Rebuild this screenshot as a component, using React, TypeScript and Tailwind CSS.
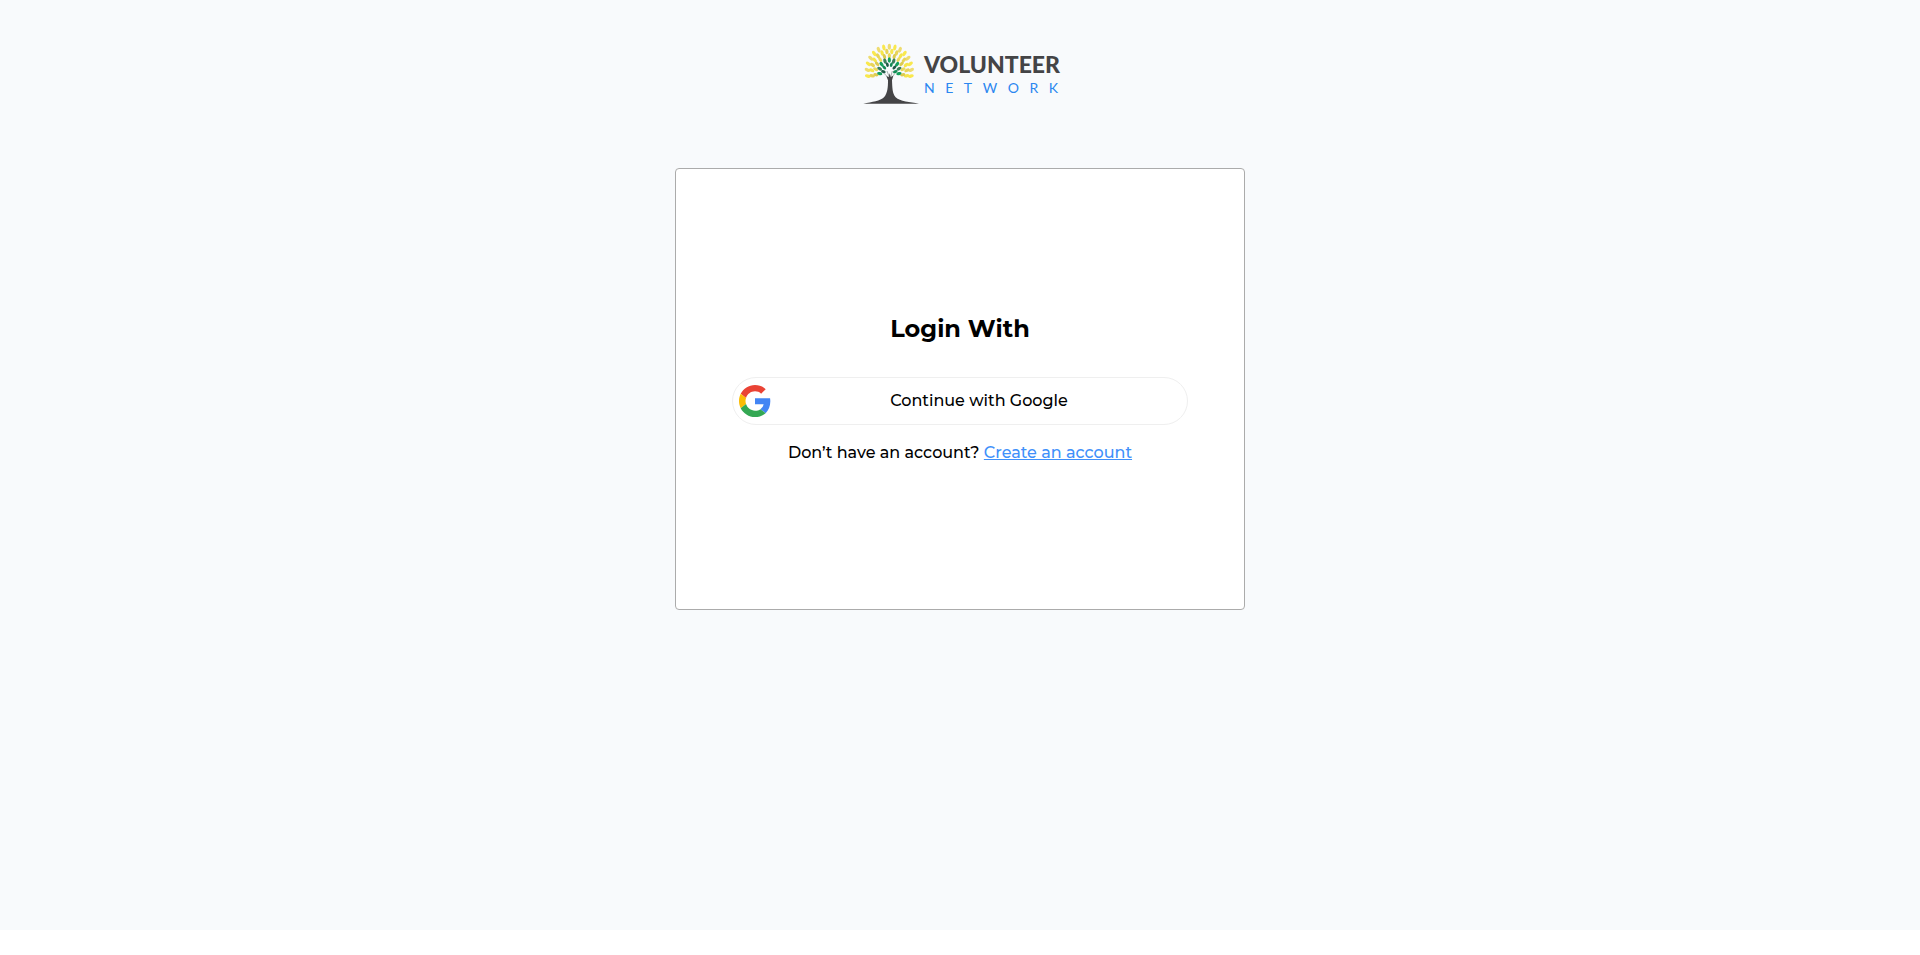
const rings = [
  { radius: 73, count: 15, spread: 102, length: 9, width: 5, colors: ["#f9e84e", "#eedc70"] },
  { radius: 59, count: 14, spread: 104, length: 8.5, width: 5, colors: ["#e8d458", "#f6e64c"] },
  { radius: 46, count: 11, spread: 104, length: 8, width: 4.8, colors: ["#dccb50", "#ead95c"] },
  { radius: 33, count: 9, spread: 104, length: 8, width: 4.8, colors: ["#14a05c", "#3b7f5a"] },
  { radius: 20, count: 6, spread: 96, length: 7, width: 4.2, colors: ["#1f5a47", "#128a55"] },
];

const crown = { x: 82, y: 84, stretch: 0.9 };

function TreeLogo() {
  return (
    <svg viewBox="0 0 174 186" className="h-[62px] w-[58px]" aria-hidden="true">
      {rings.map((ring, r) =>
        Array.from({ length: ring.count }, (_, i) => {
          const angle = -ring.spread + (2 * ring.spread * i) / (ring.count - 1);
          const radians = (angle * Math.PI) / 180;
          const x = crown.x + ring.radius * crown.stretch * Math.sin(radians);
          const y = crown.y - ring.radius * Math.cos(radians);
          return (
            <ellipse
              key={`${r}-${i}`}
              cx={x}
              cy={y}
              rx={ring.width}
              ry={ring.length}
              fill={ring.colors[i % 2]}
              transform={`rotate(${angle * 0.75} ${x} ${y})`}
            />
          );
        })
      )}
      <path d="M66 91 L81 106 M99 91 L87 106 M75 84 L82 102 M91 84 L86 102" stroke="#7d8a86" strokeWidth="2" fill="none" />
      <path
        d="M73 99 L80 103 L83 91 L86 102 L94 98 L90 112 C91 136 91 151 101 163 C114 176 144 177 171 182 L4 182 C31 177 55 174 66 163 C77 151 78 132 78 112 Z"
        fill="#444446"
      />
    </svg>
  );
}

function GoogleLogo() {
  return (
    <svg viewBox="0 0 48 48" className="size-8" aria-hidden="true">
      <path fill="#EA4335" d="M24 9.5c3.54 0 6.71 1.22 9.21 3.6l6.85-6.85C35.9 2.38 30.47 0 24 0 14.62 0 6.51 5.38 2.56 13.22l7.98 6.19C12.43 13.72 17.74 9.5 24 9.5z" />
      <path fill="#4285F4" d="M46.98 24.55c0-1.57-.15-3.09-.38-4.55H24v9.02h12.94c-.58 2.96-2.26 5.48-4.78 7.18l7.73 6c4.51-4.18 7.09-10.36 7.09-17.65z" />
      <path fill="#FBBC05" d="M10.53 28.59c-.48-1.45-.76-2.99-.76-4.59s.27-3.14.76-4.59l-7.98-6.19C.92 16.46 0 20.12 0 24c0 3.88.92 7.54 2.56 10.78l7.97-6.19z" />
      <path fill="#34A853" d="M24 48c6.48 0 11.93-2.13 15.89-5.81l-7.73-6c-2.15 1.45-4.92 2.3-8.16 2.3-6.26 0-11.57-4.22-13.47-9.91l-7.98 6.19C6.51 42.62 14.62 48 24 48z" />
    </svg>
  );
}

export default function App() {
  return (
    <div className="bg-white pb-6 font-['Montserrat','Inter',sans-serif] text-black">
      <div className="flex min-h-[calc(100vh-25px)] flex-col items-center bg-[#f8fafc] pt-[43px]">
        <header className="flex h-[62px] items-start gap-1">
          <TreeLogo />
          <div className="w-[134px] pt-[7px] font-['Lato',sans-serif]">
            <p className="text-[23px] leading-7 font-black text-[#444446]">VOLUNTEER</p>
            <p className="flex justify-between text-sm leading-5 text-[#2b87f0]" aria-label="NETWORK">
              {"NETWORK".split("").map((letter, i) => (
                <span key={i}>{letter}</span>
              ))}
            </p>
          </div>
        </header>
        <main className="mt-[63px] flex min-h-[442px] w-full max-w-[570px] flex-col items-center justify-center rounded-[4px] border border-[#ababab] bg-white px-14">
          <h1 className="text-2xl leading-8 font-bold">Login With</h1>
          <button type="button" className="mt-8 flex h-12 w-full items-center rounded-full border border-[#efefef] px-1.5">
            <GoogleLogo />
            <span className="flex-1 pl-1.5 text-center text-base leading-6 font-medium">Continue with Google</span>
          </button>
          <p className="mt-4 text-base leading-6 font-medium">
            Don’t have an account?{" "}
            <a href="#create-account" className="text-[#3f90fa] underline">
              Create an account
            </a>
          </p>
        </main>
      </div>
    </div>
  );
}
